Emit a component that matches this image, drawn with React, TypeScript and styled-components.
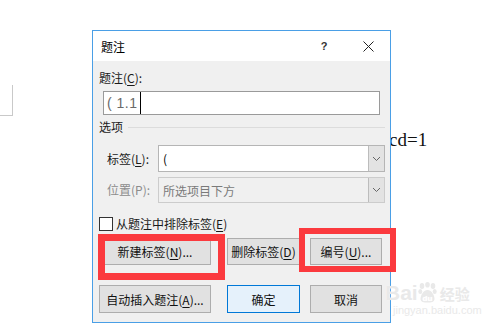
import styled, { createGlobalStyle } from 'styled-components';

const GlobalStyle = createGlobalStyle`
  html, body {
    margin: 0;
    padding: 0;
    background: #ffffff;
  }
  * {
    box-sizing: border-box;
  }
`;

const Page = styled.div`
  position: relative;
  width: 500px;
  height: 333px;
  overflow: hidden;
  background: #ffffff;
  padding: 30px 0 0 92px;
  font-family: 'Noto Sans CJK SC', 'Noto Sans', sans-serif;
  font-size: 12px;
  color: #1a1a1a;
`;

const DocBox = styled.div`
  position: absolute;
  left: -20px;
  top: 85px;
  width: 33px;
  height: 31px;
  border-right: 1px solid #c9c9c9;
  border-bottom: 1px solid #c9c9c9;
`;

const DocText = styled.div`
  position: absolute;
  left: 389px;
  top: 129px;
  font-family: 'Liberation Serif', serif;
  font-size: 19px;
  color: #111;
`;

const Dialog = styled.div`
  position: relative;
  z-index: 1;
  width: 299px;
  height: 293px;
  border: 1px solid #4a9fe6;
  background: #f0f0f0;
  display: flex;
  flex-direction: column;
`;

const TitleBar = styled.div`
  height: 30px;
  background: #ffffff;
  display: flex;
  align-items: center;
  padding-left: 8px;
`;

const TitleText = styled.span`
  flex: 1;
  font-size: 12px;
  color: #000;
`;

const TitleButton = styled.div`
  width: 44px;
  height: 30px;
  display: flex;
  align-items: center;
  justify-content: center;
  color: #333;
  font-family: 'Liberation Sans', sans-serif;
  font-weight: bold;
  font-size: 11px;
`;

const Body = styled.div`
  flex: 1;
  display: flex;
  flex-direction: column;
  padding: 9px 5px 0 6px;
`;

const Label = styled.div<{ $disabled?: boolean }>`
  line-height: 16px;
  height: 16px;
  color: ${(p) => (p.$disabled ? '#8c8c8c' : '#1a1a1a')};
  white-space: nowrap;
`;

const TextInput = styled.div`
  margin: 5px 5px 0 4px;
  height: 24px;
  background: #fff;
  border: 1px solid #9a9a9a;
  display: flex;
  align-items: stretch;
  padding-left: 3px;
`;

const InputValue = styled.span`
  display: flex;
  align-items: center;
  color: #6a6a6a;
  font-family: 'Liberation Sans', sans-serif;
  font-size: 14px;
  letter-spacing: 0.5px;
  padding-right: 2px;
  border-right: 1px solid #000;
`;

const GroupHead = styled.div`
  margin-top: 4px;
  display: flex;
  align-items: center;
`;

const GroupLine = styled.div`
  flex: 1;
  height: 1px;
  margin-left: 5px;
  background: #dcdcdc;
`;

const FieldRow = styled.div<{ $top: number; $h: number }>`
  margin-top: ${(p) => p.$top}px;
  height: ${(p) => p.$h}px;
  display: flex;
  align-items: center;
  padding-left: 8px;
`;

const FieldLabel = styled(Label)`
  width: 51px;
`;

const Combo = styled.div<{ $disabled?: boolean }>`
  flex: 1;
  height: 100%;
  display: flex;
  background: ${(p) => (p.$disabled ? '#f0f0f0' : '#ffffff')};
  border: 1px solid ${(p) => (p.$disabled ? '#cccccc' : '#b5b5b5')};
`;

const ComboValue = styled.div<{ $disabled?: boolean }>`
  flex: 1;
  display: flex;
  align-items: center;
  padding-left: 4px;
  color: ${(p) => (p.$disabled ? '#7a7a7a' : '#000')};
`;

const ComboArrow = styled.div`
  width: 16px;
  display: flex;
  align-items: center;
  justify-content: center;
  background: #e3e3e3;
  border-left: 1px solid #bcbcbc;
`;

const CheckRow = styled.div`
  margin-top: 13px;
  display: flex;
  align-items: center;
  gap: 3px;
  height: 16px;
`;

const CheckBox = styled.div`
  width: 14px;
  height: 14px;
  border: 1px solid #333;
  background: #fff;
`;

const ButtonRow = styled.div<{ $top: number }>`
  margin-top: ${(p) => p.$top}px;
  display: flex;
`;

const Button = styled.div<{ $w: number; $h: number; $gap?: number; $primary?: boolean }>`
  width: ${(p) => p.$w}px;
  height: ${(p) => p.$h}px;
  margin-left: ${(p) => p.$gap ?? 0}px;
  display: flex;
  align-items: center;
  justify-content: center;
  background: ${(p) => (p.$primary ? '#e5f1fb' : '#e1e1e1')};
  border: 1px solid ${(p) => (p.$primary ? '#0078d7' : '#adadad')};
  color: #111;
  white-space: nowrap;
`;

const U = styled.span`
  text-decoration: underline;
  text-underline-offset: 2px;
`;

const Highlight = styled.div<{ $x: number; $y: number; $w: number; $h: number; $b: number }>`
  position: absolute;
  z-index: 2;
  left: ${(p) => p.$x}px;
  top: ${(p) => p.$y}px;
  width: ${(p) => p.$w}px;
  height: ${(p) => p.$h}px;
  border: ${(p) => p.$b}px solid #fb3a3e;
`;

const Watermark = styled.div`
  position: absolute;
  z-index: 3;
  left: 385px;
  top: 279px;
  display: flex;
  flex-direction: column;
  color: #e9e9e9;
  text-shadow: 0 0 1px #ffffff;
`;

const MarkLine = styled.div`
  display: flex;
  align-items: flex-end;
  height: 24px;
`;

const MarkBai = styled.span`
  font-family: 'Liberation Sans', sans-serif;
  font-weight: bold;
  font-size: 21px;
  line-height: 21px;
`;

const MarkCn = styled.span`
  font-size: 15px;
  font-weight: bold;
  line-height: 18px;
  margin-left: 3px;
`;

const MarkUrl = styled.span`
  font-family: 'Liberation Sans', sans-serif;
  font-size: 11px;
  margin-left: 8px;
  margin-top: 1px;
`;

function Chevron() {
  return (
    <svg width="9" height="6" viewBox="0 0 9 6">
      <path d="M1 1 L4.5 4.5 L8 1" fill="none" stroke="#666" strokeWidth="1" />
    </svg>
  );
}

function CloseIcon() {
  return (
    <svg width="11" height="11" viewBox="0 0 11 11">
      <path d="M0.5 0.5 L10.5 10.5 M10.5 0.5 L0.5 10.5" stroke="#222" strokeWidth="1" />
    </svg>
  );
}

function Paw() {
  return (
    <svg width="19" height="21" viewBox="0 0 19 21">
      <g fill="#e9e9e9">
        <ellipse cx="4" cy="4" rx="2.3" ry="3" />
        <ellipse cx="9.5" cy="2.8" rx="2.3" ry="2.8" />
        <ellipse cx="15" cy="4" rx="2.3" ry="3" />
        <ellipse cx="2.3" cy="9.5" rx="2" ry="2.6" />
        <ellipse cx="16.7" cy="9.5" rx="2" ry="2.6" />
        <path d="M9.5 8 C5 8 2.5 14 2.5 17 C2.5 20 6 20.5 9.5 20.5 C13 20.5 16.5 20 16.5 17 C16.5 14 14 8 9.5 8 Z" />
      </g>
      <text x="9.5" y="18.5" textAnchor="middle" fontFamily="Liberation Sans, sans-serif" fontWeight="bold" fontSize="8" fill="#ffffff">du</text>
    </svg>
  );
}

export default function App() {
  return (
    <Page>
      <GlobalStyle />
      <DocBox />
      <DocText>cd=1</DocText>
      <Dialog>
        <TitleBar>
          <TitleText>题注</TitleText>
          <TitleButton>?</TitleButton>
          <TitleButton>
            <CloseIcon />
          </TitleButton>
        </TitleBar>
        <Body>
          <Label>
            题注(<U>C</U>):
          </Label>
          <TextInput>
            <InputValue>( 1.1</InputValue>
          </TextInput>
          <GroupHead>
            <Label>选项</Label>
            <GroupLine />
          </GroupHead>
          <FieldRow $top={10} $h={27}>
            <FieldLabel>
              标签(<U>L</U>):
            </FieldLabel>
            <Combo>
              <ComboValue>(</ComboValue>
              <ComboArrow>
                <Chevron />
              </ComboArrow>
            </Combo>
          </FieldRow>
          <FieldRow $top={5} $h={26}>
            <FieldLabel $disabled>位置(P):</FieldLabel>
            <Combo $disabled>
              <ComboValue $disabled>所选项目下方</ComboValue>
              <ComboArrow>
                <Chevron />
              </ComboArrow>
            </Combo>
          </FieldRow>
          <CheckRow>
            <CheckBox />
            <Label>
              从题注中排除标签(<U>E</U>)
            </Label>
          </CheckRow>
          <ButtonRow $top={6}>
            <Button $w={112} $h={27}>
              新建标签(<U>N</U>)...
            </Button>
            <Button $w={73} $h={27} $gap={16}>
              删除标签(<U>D</U>)
            </Button>
            <Button $w={72} $h={27} $gap={10}>
              编号(<U>U</U>)...
            </Button>
          </ButtonRow>
          <ButtonRow $top={20}>
            <Button $w={112} $h={28}>
              自动插入题注(<U>A</U>)...
            </Button>
            <Button $w={73} $h={28} $gap={16} $primary>
              确定
            </Button>
            <Button $w={72} $h={28} $gap={10}>
              取消
            </Button>
          </ButtonRow>
        </Body>
      </Dialog>
      <Highlight $x={98} $y={234} $w={127} $h={46} $b={7} />
      <Highlight $x={299} $y={228} $w={97} $h={44} $b={6} />
      <Watermark>
        <MarkLine>
          <MarkBai>Bai</MarkBai>
          <Paw />
          <MarkCn>经验</MarkCn>
        </MarkLine>
        <MarkUrl>jingyan.baidu.com</MarkUrl>
      </Watermark>
    </Page>
  );
}
